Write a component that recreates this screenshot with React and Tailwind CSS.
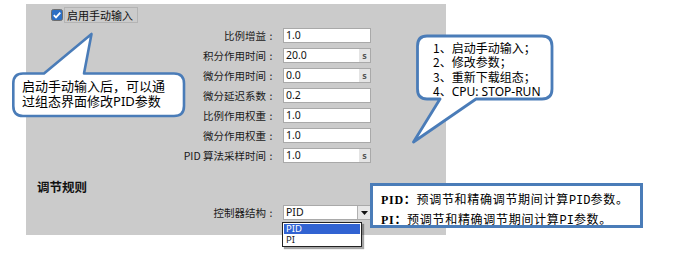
import React from 'react';

const rows = [
  { label: '比例增益', value: '1.0' },
  { label: '积分作用时间', value: '20.0', unit: 's' },
  { label: '微分作用时间', value: '0.0', unit: 's' },
  { label: '微分延迟系数', value: '0.2' },
  { label: '比例作用权重', value: '1.0' },
  { label: '微分作用权重', value: '1.0' },
  { label: 'PID 算法采样时间', value: '1.0', unit: 's' },
];

const sans = "font-['Noto_Sans','Noto_Sans_CJK_SC',sans-serif]";
const cjk = "font-['Noto_Sans_CJK_SC',sans-serif]";

const FieldRow = ({ label, children }) => (
  <div className="flex items-center h-[15px]">
    <div className={`w-[250px] flex justify-end items-center text-[10.5px] leading-[15px] text-[#1a1a1a] ${cjk}`}>
      <span>{label}</span>
      <span className="w-[10px] text-center">:</span>
    </div>
    <div className="ml-[7px]">{children}</div>
  </div>
);

const App = () => {
  return (
    <div className={`relative w-[673px] h-[254px] overflow-hidden bg-white ${cjk}`}>
      {/* settings panel */}
      <div className="ml-[26px] pt-[4px]">
        <div className="w-[420px] h-[231px] bg-[#cbcbcb] pt-[3px]">
          {/* manual input checkbox */}
          <div className="flex items-center pl-[25px] h-[16px]">
            <svg width="12" height="12" viewBox="0 0 12 12">
              <rect x="0.5" y="0.5" width="11" height="11" rx="2" fill="#2c6fc4" stroke="#6d6d6d" />
              <path d="M2.8 6.2 L5 8.4 L9.3 3.6" fill="none" stroke="#fff" strokeWidth="1.8" />
            </svg>
            <div className="ml-[1px] w-[74px] h-[16px] border border-[#b4b4b4] flex items-center pl-[2px] text-[11px] leading-[14px] text-[#111]">
              启用手动输入
            </div>
          </div>

          {/* parameter rows */}
          <div className="mt-[5px] flex flex-col gap-[5px]">
            {rows.map((r) => (
              <FieldRow key={r.label} label={r.label}>
                <div className="w-[88px] h-[15px] bg-white border border-[#a9a9a9] flex items-center">
                  <span className={`pl-[2px] text-[10.5px] leading-none text-[#111] ${sans}`}>{r.value}</span>
                  {r.unit && (
                    <span className={`ml-auto w-[11px] h-full bg-[#e4e4e4] flex items-center justify-center text-[9px] font-bold text-[#555] ${sans}`}>
                      {r.unit}
                    </span>
                  )}
                </div>
              </FieldRow>
            ))}
          </div>

          {/* section heading */}
          <div className="mt-[17px] pl-[11px] text-[12.5px] font-bold text-[#111] leading-[14px]">调节规则</div>

          <div className="mt-[11px]">
            <FieldRow label="控制器结构">
              <div className="w-[88px] h-[15px] bg-white border border-[#a9a9a9] flex items-center">
                <span className={`pl-[2px] text-[10.5px] leading-none text-[#111] ${sans}`}>PID</span>
                <span className="ml-auto w-[13px] h-full bg-[#e6e6e6] border-l border-[#b0b0b0] flex items-center justify-center">
                  <svg width="7" height="4" viewBox="0 0 7 4">
                    <path d="M0 0 L7 0 L3.5 4 Z" fill="#111" />
                  </svg>
                </span>
              </div>
            </FieldRow>
          </div>
        </div>
      </div>

      {/* dropdown list */}
      <div className={`absolute left-[282px] top-[222px] w-[80px] h-[25px] bg-white border border-[#222] shadow-[2px_2px_1px_rgba(0,0,0,0.35)] text-[9.5px] ${sans}`}>
        <div className="h-[10px] mt-[1px] mx-[1px] bg-[#3163d2] text-white leading-[10px] pl-[2px]">PID</div>
        <div className="h-[11px] leading-[11px] pl-[3px] text-[#222]">PI</div>
      </div>

      {/* callout shapes */}
      <svg className="absolute left-0 top-0 pointer-events-none" width="673" height="254">
        <path
          d="M23 73.5 L44 73.5 L91.5 34 L84 73.5 L174 73.5 Q184 73.5 184 83.5 L184 106 Q184 116 174 116 L23 116 Q13.3 116 13.3 106 L13.3 83.5 Q13.3 73.5 23 73.5 Z"
          fill="#fff"
          stroke="#4a7cb8"
          strokeWidth="2.6"
          strokeLinejoin="round"
        />
        <path
          d="M427 36 L542 36 Q552 36 552 46 L552 89 Q552 99 542 99 L476 99 L413.5 142 L440 99 L427 99 Q417.5 99 417.5 89 L417.5 46 Q417.5 36 427 36 Z"
          fill="#fff"
          stroke="#4a7cb8"
          strokeWidth="2.8"
          strokeLinejoin="round"
        />
      </svg>

      {/* callout 1 text */}
      <div className="absolute left-[22px] top-[79px] text-[13px] leading-[14.5px] text-black">
        <div>启动手动输入后，可以通</div>
        <div>过组态界面修改<span className={sans}>PID</span>参数</div>
      </div>

      {/* callout 2 text */}
      <div className="absolute left-[433px] top-[41px] text-[12px] leading-[14.3px] text-black">
        <div>1、启动手动输入；</div>
        <div>2、修改参数；</div>
        <div>3、重新下载组态；</div>
        <div>4、<span className={sans}>CPU: STOP-RUN</span></div>
      </div>

      {/* rule note box */}
      <div className="absolute left-[370px] top-[183px] w-[273px] h-[45px] bg-white border-[3px] border-[#4a7cb8] pl-[8px] pt-[4px] text-[12px] leading-[17px] tracking-[0.7px] text-black">
        <div>
          <span className="font-bold font-['Liberation_Serif',serif]">PID</span>
          <span className="font-bold">：</span>预调节和精确调节期间计算<span className="font-['Liberation_Mono',monospace] tracking-normal">PID</span>参数。
        </div>
        <div>
          <span className="font-bold font-['Liberation_Serif',serif]">PI</span>
          <span className="font-bold">：</span>预调节和精确调节期间计算<span className="font-['Liberation_Mono',monospace] tracking-normal">PI</span>参数。
        </div>
      </div>
    </div>
  );
};

export default App;
